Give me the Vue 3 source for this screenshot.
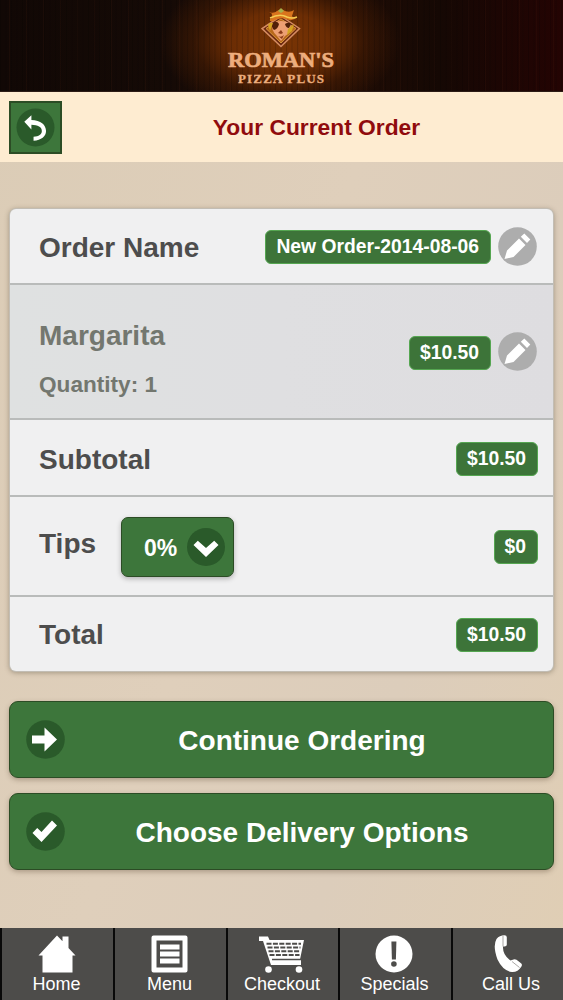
<template>
  <div class="page">
    <header class="banner">
      <svg class="logo" viewBox="0 0 140 91" width="140" height="91">
        <g class="emblem">
          <path d="M69 16L87.500 28.500L69 46.500L50 28.500Z" fill="#6b280e" stroke="#d58c63" stroke-width="1.500" />
          <path d="M69 19L84 28.500L69 43L54 28.500Z" fill="#b8681b" stroke="#d9963f" stroke-width="1" />
          <path d="M60 23q9-4 18 0l1 5q-2 6-6 8l-4 5-4-5q-6-5-5-13z" fill="#ed9f72" />
          <path d="M60 23q5-3 7 1-1 5-5 6-3-3-2-7zM73 24q4-3 6 0l-2 4q-3 0-4-4z" fill="#512008" />
          <path d="M56 25q2-3 5-2l-3 8zM76 29l6-5-2 7-5 4z" fill="#d4a421" />
          <path d="M66 33l3-3 2 3-2 1zM66 36q3 2 6-1l-2 4z" fill="#8c3a17" />
          <path d="M57 12q5 2 8-1l4-2 4 2q5 2 9-1l-2 6q2 4 6 1-6 5-12 2-6-2-13 2-4 1-3-2 4 0 1-7z" fill="#d9741d" />
          <path d="M58 18q10-5 17-1 5 2 10 0" fill="none" stroke="#f5cb52" stroke-width="1.500" />
          <path d="M66 11l3-3 3 3-3 2z" fill="#a5b04a" />
        </g>
        <text class="brand" x="16" y="66.500" textLength="106" lengthAdjust="spacingAndGlyphs">ROMAN'S</text>
        <text class="brand-sub" x="26" y="82.500" textLength="86" lengthAdjust="spacing">PIZZA PLUS</text>
      </svg>
    </header>

    <div class="title-bar">
      <button class="back" aria-label="Back">
        <svg viewBox="0 0 40 40" width="39" height="39">
          <circle cx="20" cy="20" r="19.500" fill="#2a5a2a" />
          <path d="M8.500 14L15.800 7.500v4.700c9.500.3 15 4.800 15 11.300 0 5.500-4.800 9.500-12.800 10v-4c5.500-.5 8.500-2.700 8.500-6 0-4-4-6.200-10.700-6.300v4.800z" fill="#fff" />
        </svg>
      </button>
      <h1>Your Current Order</h1>
    </div>

    <main>
      <section class="card">
        <div class="row name">
          <span class="label">Order Name</span>
          <span class="badge">{{ orderName }}</span>
          <svg class="edit" viewBox="0 0 39 39" width="39" height="39">
            <circle cx="19.500" cy="19.500" r="19.300" />
            <path :d="pencil" />
          </svg>
        </div>

        <div class="row item">
          <div class="product">
            <span class="label">{{ item.name }}</span>
            <span class="quantity">Quantity: {{ item.quantity }}</span>
          </div>
          <span class="badge">{{ item.price }}</span>
          <svg class="edit" viewBox="0 0 39 39" width="39" height="39">
            <circle cx="19.500" cy="19.500" r="19.300" />
            <path :d="pencil" />
          </svg>
        </div>

        <div class="row subtotal">
          <span class="label">Subtotal</span>
          <span class="badge">$10.50</span>
        </div>

        <div class="row tips">
          <span class="label">Tips</span>
          <button class="select">
            <span>0%</span>
            <svg viewBox="0 0 38 38" width="38" height="38">
              <circle cx="19" cy="19" r="19" fill="#2a5a2a" />
              <path d="M6.500 17L10.800 12.800L19 20L27.200 12.800L31.500 17L19 29Z" fill="#fff" />
            </svg>
          </button>
          <span class="badge">$0</span>
        </div>

        <div class="row total">
          <span class="label">Total</span>
          <span class="badge">$10.50</span>
        </div>
      </section>

      <button v-for="action in actions" :key="action.text" class="action">
        <svg viewBox="0 0 39 39" width="39" height="39">
          <circle cx="19.500" cy="19.500" r="19.300" fill="#2a5a2a" />
          <path :d="action.icon" fill="#fff" />
        </svg>
        <span>{{ action.text }}</span>
      </button>
    </main>

    <nav class="tabs">
      <a class="tab">
        <svg viewBox="0 0 40 40" width="40" height="40">
          <path d="M20 1.500L1.500 21.500H5.500V38.500H35.500V21.500H38.500L31.500 14V2.500H25.500V7.200Z" />
        </svg>
        Home
      </a>
      <a class="tab">
        <svg viewBox="0 0 40 40" width="40" height="40">
          <path fill-rule="evenodd" d="M3.500 1.500h32q2 0 2 2v33q0 2-2 2h-32q-2 0-2-2v-33q0-2 2-2zM6.500 6.500v27h26v-27z" />
          <path d="M10 10.500h19.500v5H10zM10 17.500h19.500v5H10zM10 24.500h19.500v5H10z" />
        </svg>
        Menu
      </a>
      <a class="tab">
        <svg viewBox="0 0 46 40" width="46" height="40">
          <path d="M0 2.500h9l1.500 3.500H45l-4 19.500H42V31H12L4 7H0z" />
          <path d="M7.500 9.700H42M8.500 13.500H41.500M9.500 17.300H41M10.500 21H40.500" stroke="#4d4c4a" stroke-width="2" stroke-dasharray="5 1.400" />
          <path d="M13 25.500H42" stroke="#4d4c4a" stroke-width="1.500" />
          <circle cx="9.500" cy="35.500" r="3.300" />
          <circle cx="40" cy="35.500" r="3.300" />
        </svg>
        Checkout
      </a>
      <a class="tab">
        <svg viewBox="0 0 40 40" width="40" height="40">
          <circle cx="19" cy="20" r="18.500" />
          <path d="M16.400 7.500h5l-.5 18h-4z" fill="#4d4c4a" />
          <circle cx="18.900" cy="30" r="2.800" fill="#4d4c4a" />
        </svg>
        Specials
      </a>
      <a class="tab call">
        <svg viewBox="0 0 40 40" width="40" height="40">
          <path d="M4.500 5q3-3.600 8-3.700 2.300 0 2.300 2v7.500q0 1.700-2.300 1.700H11q-.5 8.500 7.500 14l3-1q1.500-.6 3 .3l4.500 3.500q1.700 1.500.3 3.500-3.500 5.500-9.300 5.200-9-1-14.500-12.500Q.500 12 4.500 5z" />
          <path d="M11 2v10.500M20 27.500l7.500 6" fill="none" stroke="#85837f" stroke-width=".7" />
        </svg>
        Call Us
      </a>
    </nav>
  </div>
</template>

<script setup>
const orderName = 'New Order-2014-08-06'

const item = {
  name: 'Margarita',
  quantity: 1,
  price: '$10.50'
}

const pencil = 'M6.500 32L9 23.500L21 11.500L27.500 18L15.500 30ZM22.800 9.800L26.300 6.500L32.300 12.500L29 16Z'

const actions = [
  { text: 'Continue Ordering', icon: 'M6 15.500H18.500V7.500L31 19.500L18.500 31.500V23.500H6Z' },
  { text: 'Choose Delivery Options', icon: 'M6.500 21L11.200 16L15.500 20L26 8.500L31 13.500L15.500 30Z' }
]
</script>

<style>
body {
  margin: 0;
}
</style>

<style scoped>
* {
  box-sizing: border-box;
}
.page {
  display: flex;
  flex-direction: column;
  width: 563px;
  height: 1000px;
  overflow: hidden;
  font-family: "Liberation Sans", Arial, sans-serif;
  background: linear-gradient(110deg, #dbccb6, #dfcfbb 45%, #dccdbb 70%, #e0ceb4);
}
button {
  font-family: inherit;
  font-weight: bold;
  color: #fff;
  padding: 0;
  background: #3d763b;
  border: 1.5px solid #2c4c25;
}
svg {
  display: block;
  flex: none;
}
.banner {
  display: flex;
  justify-content: center;
  height: 92px;
  flex: none;
  border-bottom: 1px solid #2c1b15;
  background:
    repeating-linear-gradient(90deg, rgba(0, 0, 0, 0.15) 0 1px, transparent 1px 5px, rgba(0, 0, 0, 0.08) 5px 7px, transparent 7px 11px),
    repeating-linear-gradient(90deg, transparent 0 9px, rgba(90, 40, 20, 0.12) 9px 10px, transparent 10px 17px),
    radial-gradient(ellipse 120px 75px at 280px 42px, #7a3504 0, #6c2d04 40%, rgba(72, 29, 3, 0.6) 70%, transparent 100%),
    linear-gradient(90deg, #110805, #150a06 30%, #281005 50%, #150804 78%, #240403);
}
.brand,
.brand-sub {
  font-family: "Liberation Serif", serif;
  font-weight: bold;
  fill: #edae7d;
  stroke: #edae7d;
}
.brand {
  font-size: 22px;
  stroke-width: 0.7px;
}
.brand-sub {
  font-size: 13px;
  stroke-width: 0.3px;
}
.title-bar {
  display: flex;
  align-items: center;
  height: 70px;
  flex: none;
  padding: 0 9px;
  background: #feecd1;
}
.back {
  display: flex;
  align-items: center;
  justify-content: center;
  width: 53px;
  height: 53px;
  border-width: 2px;
}
h1 {
  flex: 1;
  margin: 0 0 0 17px;
  text-align: center;
  font-size: 22.8px;
  line-height: 26px;
  color: #900b0d;
}
main {
  flex: 1;
  padding: 47px 9px 0;
}
.card {
  margin: 0 1px 30px;
  border-radius: 6px;
  overflow: hidden;
  background: #f0f0f1;
  box-shadow: 0 0 0 1px #c2bdb4, 0 1px 5px 1px rgba(80, 70, 50, 0.4);
}
.row {
  display: flex;
  align-items: center;
  padding: 2px 15px 0 29px;
  border-bottom: 2px solid #b9bbba;
}
.name {
  height: 76px;
}
.item {
  height: 135px;
  background: linear-gradient(90deg, #dfe1e1, #dfdfe1 50%, #dedde0);
}
.subtotal {
  height: 77px;
}
.tips {
  height: 100px;
}
.total {
  height: 74px;
  border-bottom: 0;
}
.label {
  font-size: 28px;
  font-weight: bold;
  line-height: 32px;
  color: #4d4d4d;
}
.name .label,
.subtotal .label {
  padding-top: 2px;
}
.tips .label {
  padding-bottom: 6px;
}
.product {
  display: flex;
  flex-direction: column;
  gap: 20px;
  margin-top: 13px;
}
.product .label {
  color: #73776f;
}
.quantity {
  font-size: 22.6px;
  font-weight: bold;
  line-height: 26px;
  color: #73776f;
}
.badge {
  margin-left: auto;
  padding: 0 11px 0 10px;
  height: 34px;
  border: 1.5px solid #55a651;
  border-radius: 6px;
  background: #3d7439;
  color: #fff;
  font-size: 19.3px;
  font-weight: bold;
  line-height: 32px;
}
.edit {
  margin: 0 1px 2px 7px;
}
.edit circle {
  fill: #adadad;
}
.edit path {
  fill: #fff;
}
.select {
  display: flex;
  align-items: center;
  gap: 10px;
  width: 113px;
  height: 60px;
  margin-left: 25px;
  padding-left: 22px;
  border-radius: 7px;
  font-size: 23px;
  box-shadow: 0 2px 5px rgba(0, 0, 0, 0.25);
}
.select span {
  padding-top: 2px;
}
.action {
  display: flex;
  align-items: center;
  width: 100%;
  height: 77px;
  margin-bottom: 15px;
  padding: 0 16px;
  border-radius: 9px;
  box-shadow: 0 2px 5px rgba(80, 60, 40, 0.35);
  font-size: 28px;
}
.action span {
  flex: 1;
  padding: 2px 0 0 2px;
}
.tabs {
  display: grid;
  grid-template-columns: 113px 113px 112px 113px 112px;
  height: 72px;
  flex: none;
}
.tab {
  display: flex;
  flex-direction: column;
  align-items: center;
  padding: 6px 2px 0 0;
  border-left: 2px solid #090909;
  background: #4d4c4a;
  color: #fff;
  font-size: 18px;
  line-height: 20px;
}
.tab svg {
  fill: #fff;
}
.call {
  padding: 6px 0 0 6px;
}
.call svg {
  margin-left: 1px;
}
</style>
